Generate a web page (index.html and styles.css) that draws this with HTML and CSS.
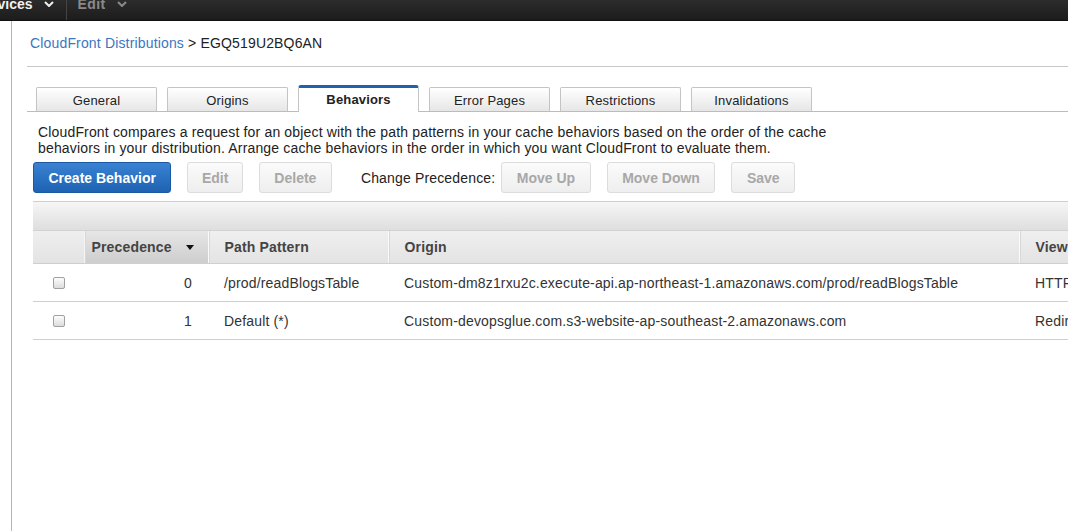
FILE: index.html
```html
<!DOCTYPE html>
<html>
<head>
<meta charset="utf-8">
<link rel="stylesheet" href="styles.css">
</head>
<body>
<header class="topbar">
  <div class="menu menu-services">Services <svg class="chev" viewBox="0 0 10 6" width="10" height="6"><path d="M1 1 L5 5 L9 1" fill="none" stroke="currentColor" stroke-width="2"/></svg></div>
  <div class="sep"></div>
  <div class="menu menu-edit">Edit <svg class="chev" viewBox="0 0 10 6" width="10" height="6"><path d="M1 1 L5 5 L9 1" fill="none" stroke="currentColor" stroke-width="2"/></svg></div>
</header>
<div class="page">
  <aside class="gutter"></aside>
  <main class="main">
    <div class="breadcrumb"><a class="crumb-link">CloudFront Distributions</a> &gt; EGQ519U2BQ6AN</div>
    <nav class="tabs">
      <div class="tab">General</div>
      <div class="tab">Origins</div>
      <div class="tab active">Behaviors</div>
      <div class="tab">Error Pages</div>
      <div class="tab">Restrictions</div>
      <div class="tab">Invalidations</div>
    </nav>
    <p class="desc">CloudFront compares a request for an object with the path patterns in your cache behaviors based on the order of the cache<br>behaviors in your distribution. Arrange cache behaviors in the order in which you want CloudFront to evaluate them.</p>
    <div class="toolbar">
      <button class="btn primary">Create Behavior</button>
      <button class="btn btn-edit" disabled>Edit</button>
      <button class="btn" disabled>Delete</button>
      <span class="label">Change Precedence:</span>
      <button class="btn" disabled>Move Up</button>
      <button class="btn" disabled>Move Down</button>
      <button class="btn" disabled>Save</button>
    </div>
    <div class="table-wrap">
      <div class="table-bar"></div>
      <table class="grid">
        <colgroup>
          <col class="c-check"><col class="c-prec"><col class="c-path"><col class="c-origin"><col class="c-viewer">
        </colgroup>
        <thead>
          <tr>
            <th class="th-check"></th>
            <th class="th-sorted">Precedence <span class="sort-arrow"></span></th>
            <th>Path Pattern</th>
            <th>Origin</th>
            <th>Viewer Protocol Policy</th>
          </tr>
        </thead>
        <tbody>
          <tr>
            <td class="td-check"><input type="checkbox" class="cb"></td>
            <td class="num">0</td>
            <td>/prod/readBlogsTable</td>
            <td>Custom-dm8z1rxu2c.execute-api.ap-northeast-1.amazonaws.com/prod/readBlogsTable</td>
            <td>HTTP and HTTPS</td>
          </tr>
          <tr>
            <td class="td-check"><input type="checkbox" class="cb"></td>
            <td class="num">1</td>
            <td>Default (*)</td>
            <td>Custom-devopsglue.com.s3-website-ap-southeast-2.amazonaws.com</td>
            <td>Redirect HTTP to HTTPS</td>
          </tr>
        </tbody>
      </table>
    </div>
  </main>
</div>
</body>
</html>
```

FILE: styles.css
```css
html, body {
  margin: 0;
  padding: 0;
  overflow: hidden;
  height: 100%;
  background: #fff;
}
body {
  font-family: "Liberation Sans", Arial, sans-serif;
  font-size: 14px;
  letter-spacing: 0.16px;
  color: #222;
}
.topbar {
  height: 21px;
  background: linear-gradient(#2c2c2c, #1c1c1c);
  display: flex;
  align-items: center;
  overflow: hidden;
  border-bottom: 1px solid #111;
  box-sizing: border-box;
  letter-spacing: 0;
}
.menu {
  font-weight: bold;
  font-size: 14px;
  display: flex;
  align-items: center;
  margin-top: -13px;
}
.menu-services {
  color: #f0f0f0;
  margin-left: -25px;
  gap: 11px;
}
.menu-edit {
  color: #8a8a8a;
  margin-left: 11px;
  gap: 11px;
  letter-spacing: 0.4px;
}
.chev { display: block; }
.sep {
  width: 1px;
  align-self: stretch;
  background: #444;
  margin-left: 12px;
}
.page {
  display: flex;
  height: calc(100% - 21px);
}
.gutter {
  width: 11px;
  border-right: 1px solid #b4b4b4;
  flex: none;
}
.main {
  flex: 1;
  min-width: 0;
  padding-left: 15px;
}
.breadcrumb {
  padding: 14px 0 15px 3px;
  line-height: 16px;
  border-bottom: 1px solid #c8c8c8;
  color: #222;
}
.crumb-link {
  color: #3d76bf;
  text-decoration: none;
}
.tabs {
  display: flex;
  align-items: flex-end;
  gap: 10px;
  margin-top: 18px;
  padding-left: 9px;
  border-bottom: 1px solid #bcbcbc;
  height: 26px;
}
.tab {
  width: 121px;
  box-sizing: border-box;
  height: 24px;
  border: 1px solid #c4c4c4;
  border-bottom: none;
  border-radius: 2px 2px 0 0;
  background: linear-gradient(#ffffff, #e6e6e6);
  font-size: 13px;
  line-height: 25px;
  text-align: center;
  color: #222;
}
.tab.active {
  height: 27px;
  margin-bottom: -1px;
  background: #fff;
  border-top: 3px solid #1f62ad;
  border-radius: 3px 3px 0 0;
  font-weight: bold;
  line-height: 24px;
}
.desc {
  margin: 12px 0 0 0;
  padding-left: 11px;
  line-height: 16px;
  color: #222;
}
.toolbar {
  display: flex;
  align-items: center;
  gap: 16px;
  margin-top: 6px;
  padding-left: 6px;
}
.btn {
  height: 31px;
  padding: 0 14.5px;
  border: 1px solid #dcdcdc;
  border-radius: 3px;
  background: linear-gradient(#fbfbfb, #eeeeee);
  font-family: "Liberation Sans", Arial, sans-serif;
  font-size: 14px;
  font-weight: bold;
  letter-spacing: 0;
  color: #a8a8a8;
}
.btn.btn-edit { padding: 0 13.5px; }
.btn.primary {
  border-color: #1a5aa3;
  background: linear-gradient(#3a82d3, #1e62b2);
  color: #fff;
}
.label {
  margin-left: 13px;
  margin-right: -10px;
  color: #222;
}
.table-wrap {
  margin-top: 8px;
  margin-left: 6px;
  overflow: hidden;
}
.table-bar {
  height: 28px;
  border-top: 1px solid #cfcfcf;
  border-bottom: 1px solid #d2d2d2;
  background: linear-gradient(#f6f6f6, #dedede);
  width: 1200px;
}
.grid {
  border-collapse: collapse;
  table-layout: fixed;
  width: 1136px;
}
.c-check { width: 51px; }
.c-prec { width: 124px; }
.c-path { width: 180px; }
.c-origin { width: 631px; }
.c-viewer { width: 150px; }
.grid th {
  height: 32px;
  padding: 0 0 0 16px;
  text-align: left;
  font-weight: bold;
  color: #444;
  background: linear-gradient(#efefef, #e3e3e3);
  border-left: 1px solid #fafafa;
  border-bottom: 1px solid #cfcfcf;
  white-space: nowrap;
  overflow: hidden;
}
.grid th.th-check { border-left: none; }
.grid th.th-sorted {
  background: linear-gradient(#e6e6e6, #cdcdcd);
  padding-left: 7px;
  border-left: 1px solid #f4f4f4;
}
.grid th + th { box-shadow: inset 1px 0 0 #d8d8d8; }
.sort-arrow {
  display: inline-block;
  width: 0;
  height: 0;
  border-left: 4px solid transparent;
  border-right: 4px solid transparent;
  border-top: 5px solid #111;
  margin-left: 10px;
  vertical-align: 2px;
}
.grid td {
  height: 37px;
  padding: 0 0 0 16px;
  border-bottom: 1px solid #cfcfcf;
  color: #333;
  white-space: nowrap;
  overflow: hidden;
}
.grid td.num {
  text-align: right;
  padding: 0 16px 0 0;
}
.grid td.td-check { padding-left: 20px; }
.cb {
  appearance: none;
  -webkit-appearance: none;
  width: 12px;
  height: 12px;
  margin: 0;
  display: block;
  border: 1px solid #a0a0a0;
  border-radius: 2px;
  background: linear-gradient(#fdfdfd, #dcdcdc);
}
```
